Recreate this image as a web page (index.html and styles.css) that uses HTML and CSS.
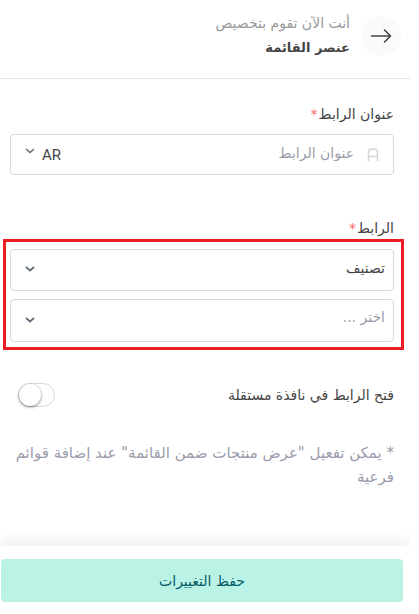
FILE: index.html
```html
<!DOCTYPE html>
<html lang="ar" dir="rtl">
<head>
    <meta charset="UTF-8">
    <title>عنصر القائمة</title>
    <meta name="viewport" content="width=device-width, initial-scale=1.0">
    <link rel="stylesheet" href="styles.css">
</head>
<body>

    <div class="panel">

        <!-- Header -->
        <header class="panel-header">
            <button type="button" class="back-btn" aria-label="رجوع">
                <svg width="22" height="16" viewBox="0 0 22 16" fill="none" stroke="#444" stroke-width="1.6" stroke-linecap="round" stroke-linejoin="round">
                    <path d="M1.5 8H20.5M14.5 2L20.5 8L14.5 14"/>
                </svg>
            </button>
            <div class="panel-title">
                <p>أنت الآن تقوم بتخصيص</p>
                <h1>عنصر القائمة</h1>
            </div>
        </header>

        <form id="itemForm" class="panel-body">

            <!-- Link title -->
            <div class="field">
                <label for="linkTitle">عنوان الرابط<span class="required">*</span></label>
                <div class="input-group">
                    <svg width="12" height="13" viewBox="0 0 12 13" fill="none" stroke="#d5d5d5" stroke-width="1.5">
                        <path d="M1.5 13V4.5Q1.5 1 5 1H7Q10.5 1 10.5 4.5V13M1.5 8.5H10.5"/>
                    </svg>
                    <input type="text" id="linkTitle" placeholder="عنوان الرابط">
                    <div class="lang-select">
                        <select aria-label="اللغة">
                            <option>AR</option>
                            <option>EN</option>
                        </select>
                        <svg class="chevron" width="10" height="6" viewBox="0 0 10 6" fill="none" stroke="#5f6b76" stroke-width="1.5">
                            <path d="M1 1L5 4.5L9 1"/>
                        </svg>
                    </div>
                </div>
            </div>

            <!-- Link target -->
            <div class="field">
                <label for="linkType">الرابط<span class="required">*</span></label>
                <div class="marked">
                    <div class="select-box">
                        <select id="linkType">
                            <option>تصنيف</option>
                        </select>
                        <svg class="chevron" width="10" height="6" viewBox="0 0 10 6" fill="none" stroke="#5f6b76" stroke-width="1.7">
                            <path d="M1 1L5 4.5L9 1"/>
                        </svg>
                    </div>
                    <div class="select-box">
                        <select class="empty" aria-label="اختر التصنيف">
                            <option>اختر ...</option>
                        </select>
                        <svg class="chevron" width="10" height="6" viewBox="0 0 10 6" fill="none" stroke="#5f6b76" stroke-width="1.7">
                            <path d="M1 1L5 4.5L9 1"/>
                        </svg>
                    </div>
                </div>
            </div>

            <div class="switch-row">
                <label for="newWindow">فتح الرابط في نافذة مستقلة</label>
                <input type="checkbox" id="newWindow" class="switch">
            </div>

            <p class="note">* يمكن تفعيل "عرض منتجات ضمن القائمة" عند إضافة قوائم فرعية</p>
        </form>

        <!-- Footer -->
        <footer class="panel-footer">
            <button type="submit" form="itemForm" class="save-btn">حفظ التغييرات</button>
        </footer>

    </div>

</body>
</html>
```

FILE: styles.css
```css
* {
    box-sizing: border-box;
}
body {
    margin: 0;
    background: #fff;
    color: #444;
    font-family: "DejaVu Sans", sans-serif;
    font-size: 14px;
    line-height: 24px;
}
p, h1 {
    margin: 0;
}
button, input, select {
    font: inherit;
    color: inherit;
}
svg {
    display: block;
    flex: none;
}
.panel {
    display: flex;
    flex-direction: column;
    min-height: 100vh;
    margin-right: 9px;
    overflow: hidden;
}
.panel-header {
    display: flex;
    align-items: center;
    gap: 11px;
    padding: 11px 9px 17px;
    border-bottom: 1px solid #dfe6eb;
}
.back-btn {
    display: flex;
    align-items: center;
    justify-content: center;
    width: 40px;
    height: 40px;
    padding: 0;
    border: 0;
    border-radius: 50%;
    background: #f8fafc;
}
.panel-title p {
    color: #999;
}
.panel-title h1 {
    font-size: 13px;
    line-height: 26px;
}
.panel-body {
    flex: 1;
    padding: 23px 16px 24px 10px;
}
.field {
    margin-bottom: 41px;
}
.field label {
    display: block;
    margin-bottom: 8px;
}
.required {
    margin-right: 1px;
    color: #f66;
}
.input-group {
    display: flex;
    align-items: center;
    height: 41px;
    padding: 0 14px;
    border: 1px solid #d9d9d9;
    border-radius: 4px;
}
.input-group input {
    flex: 1;
    min-width: 0;
    padding: 0 13px 4px;
    border: 0;
    outline: 0;
    background: none;
}
.input-group input::placeholder {
    color: #9a9cab;
    opacity: 1;
}
.lang-select, .select-box {
    display: grid;
    align-items: center;
}
.lang-select select, .select-box select {
    grid-area: 1 / 1;
    appearance: none;
    border: 0;
    background: none;
}
.lang-select select {
    padding: 0 0 0 16px;
    font-family: Roboto, sans-serif;
    font-size: 15px;
}
.chevron {
    grid-area: 1 / 1;
    justify-self: end;
    pointer-events: none;
}
.lang-select .chevron {
    margin-bottom: 8px;
}

/* Highlighted group around the two selects */
.marked {
    display: grid;
    gap: 8px;
    margin: -9px -10px 0 -7px;
    padding: 7px 7px 5px 4px;
    border: 3px solid #ed1c24;
}
.field .select-box select {
    width: 100%;
    height: 42px;
    padding: 0 8px 4px;
    border: 1px solid #d9d9d9;
    border-radius: 4px;
}
.field .select-box .empty {
    height: 43px;
    padding-bottom: 8px;
    color: #9a9cab;
}
.select-box .chevron {
    margin-left: 15px;
    margin-top: -2px;
}
.switch-row {
    display: flex;
    align-items: center;
    justify-content: space-between;
    margin-top: -8px;
    padding-left: 8px;
}
.switch {
    display: flex;
    appearance: none;
    width: 37px;
    height: 24px;
    margin: 0;
    border: 1px solid #d9d9d9;
    border-radius: 12px;
}
.switch::before {
    content: "";
    width: 22px;
    height: 22px;
    margin-right: auto;
    border-radius: 50%;
    background: #fff;
    box-shadow: 0 1px 3px rgba(0, 0, 0, 0.5);
}
.switch:checked {
    background: #baf3e6;
}
.switch:checked::before {
    margin-right: 0;
}
.note {
    margin-top: 34px;
    color: #9a9cab;
    font-size: 15px;
}
.panel-footer {
    padding: 13px 7px 12px 1px;
    box-shadow: 0 -4px 16px rgba(0, 0, 0, 0.08);
}
.save-btn {
    display: block;
    width: 100%;
    height: 43px;
    padding: 0;
    border: 0;
    border-radius: 4px;
    background: #baf3e6;
    color: #045b66;
}
```
